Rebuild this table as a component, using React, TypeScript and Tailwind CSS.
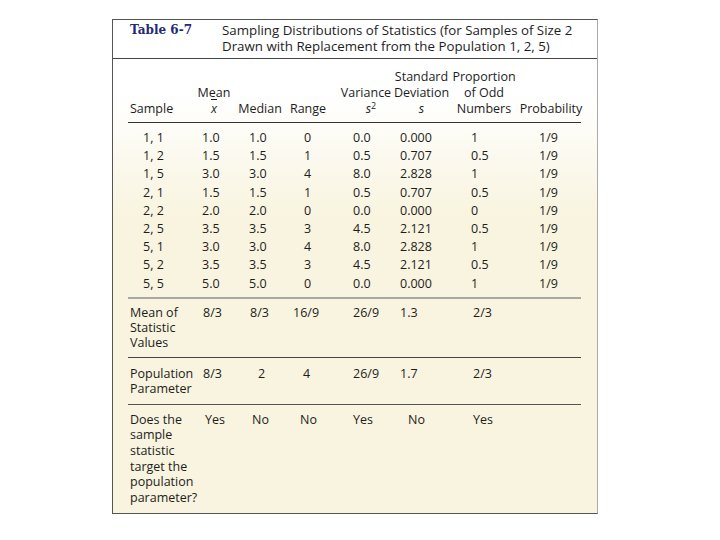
import React from "react";

const rows = [
  ["1, 1", "1.0", "1.0", "0", "0.0", "0.000", "1", "1/9"],
  ["1, 2", "1.5", "1.5", "1", "0.5", "0.707", "0.5", "1/9"],
  ["1, 5", "3.0", "3.0", "4", "8.0", "2.828", "1", "1/9"],
  ["2, 1", "1.5", "1.5", "1", "0.5", "0.707", "0.5", "1/9"],
  ["2, 2", "2.0", "2.0", "0", "0.0", "0.000", "0", "1/9"],
  ["2, 5", "3.5", "3.5", "3", "4.5", "2.121", "0.5", "1/9"],
  ["5, 1", "3.0", "3.0", "4", "8.0", "2.828", "1", "1/9"],
  ["5, 2", "3.5", "3.5", "3", "4.5", "2.121", "0.5", "1/9"],
  ["5, 5", "5.0", "5.0", "0", "0.0", "0.000", "1", "1/9"],
];

// padding of the data cells, one per column
const dataPad = ["pl-[15px]", "pl-[6px]", "pl-[17px]", "pl-[16px]", "pl-[25px]", "pl-[4px]", "pl-[27px]", "pl-[25px]"];

const cols = "grid grid-cols-[68px_36px_56px_40px_68px_48px_70px_66px]";

function Cell({ pad, children }: { pad: string; children: React.ReactNode }) {
  return <div className={`${pad} whitespace-nowrap`}>{children}</div>;
}

export default function App() {
  return (
    <div
      className="min-h-screen bg-white pt-[19px] pl-[112px] text-[#1d1d1d]"
      style={{ fontFamily: '"Open Sans", "Noto Sans", sans-serif' }}
    >
      <div className="w-[486px] border border-[#555] border-r-[#aaa] bg-white">
        {/* title */}
        <div className="flex h-[39px] pt-[2px] border-b border-[#444] text-[13.3px] leading-[16px]">
          <div
            className="w-[109px] pl-[17px] text-[12px] font-bold text-[#232a72]"
            style={{ fontFamily: '"DejaVu Serif", serif' }}
          >
            Table 6-7
          </div>
          <div>
            <div>Sampling Distributions of Statistics (for Samples of Size 2</div>
            <div>Drawn with Replacement from the Population 1, 2, 5)</div>
          </div>
        </div>

        <div className="pl-[15px] pr-[16px] bg-gradient-to-b from-white from-[8%] to-[#f8f4df] to-[35%]">
          {/* column headers */}
          <div className={`${cols} pt-[10px] pb-[5px] border-b border-[#333] text-[12.5px] leading-[16px]`}>
            <div className="flex flex-col justify-end pl-[2px]">Sample</div>
            <div className="flex flex-col justify-end items-center">
              <span>Mean</span>
              <span className="italic overline">x</span>
            </div>
            <div className="flex flex-col justify-end items-center">Median</div>
            <div className="flex flex-col justify-end items-center">Range</div>
            <div className="flex flex-col justify-end items-center pl-[8px] whitespace-nowrap">
              <span>Variance</span>
              <span className="italic pl-[10px]">
                s<sup className="not-italic text-[9px]">2</sup>
              </span>
            </div>
            <div className="flex flex-col justify-end items-center pl-[3px] whitespace-nowrap">
              <span>Standard</span>
              <span>Deviation</span>
              <span className="italic">s</span>
            </div>
            <div className="flex flex-col justify-end items-center pl-[10px] whitespace-nowrap">
              <span>Proportion</span>
              <span>of Odd</span>
              <span>Numbers</span>
            </div>
            <div className="flex flex-col justify-end items-center pl-[8px] whitespace-nowrap">
              Probability
            </div>
          </div>

          {/* sample rows */}
          <div className="pt-[6px] pb-[4px] border-b-2 border-[#a8a8a8] text-[12.5px] leading-[18.2px]">
            {rows.map((r, i) => (
              <div key={i} className={cols}>
                {r.map((v, j) => (
                  <Cell key={j} pad={dataPad[j]}>
                    {v}
                  </Cell>
                ))}
              </div>
            ))}
          </div>

          {/* mean of statistic values */}
          <div className={`${cols} pt-[6px] pb-[7px] border-b border-[#444] text-[12.5px] leading-[15px]`}>
            <div className="pl-[2px]">
              Mean of
              <br />
              Statistic
              <br />
              Values
            </div>
            <Cell pad="pl-[7px]">8/3</Cell>
            <Cell pad="pl-[18px]">8/3</Cell>
            <Cell pad="pl-[5px]">16/9</Cell>
            <Cell pad="pl-[25px]">26/9</Cell>
            <Cell pad="pl-[4px]">1.3</Cell>
            <Cell pad="pl-[29px]">2/3</Cell>
            <div />
          </div>

          {/* population parameter */}
          <div className={`${cols} pt-[8px] pb-[8px] border-b border-[#555] text-[12.5px] leading-[15px]`}>
            <div className="pl-[2px]">
              Population
              <br />
              Parameter
            </div>
            <Cell pad="pl-[7px]">8/3</Cell>
            <Cell pad="pl-[26px]">2</Cell>
            <Cell pad="pl-[15px]">4</Cell>
            <Cell pad="pl-[25px]">26/9</Cell>
            <Cell pad="pl-[4px]">1.7</Cell>
            <Cell pad="pl-[29px]">2/3</Cell>
            <div />
          </div>

          {/* targets */}
          <div className={`${cols} pt-[7px] pb-[8px] text-[12.5px] leading-[15.6px]`}>
            <div className="pl-[2px]">
              Does the
              <br />
              sample
              <br />
              statistic
              <br />
              target the
              <br />
              population
              <br />
              parameter?
            </div>
            <Cell pad="pl-[9px]">Yes</Cell>
            <Cell pad="pl-[20px]">No</Cell>
            <Cell pad="pl-[12px]">No</Cell>
            <Cell pad="pl-[25px]">Yes</Cell>
            <Cell pad="pl-[12px]">No</Cell>
            <Cell pad="pl-[29px]">Yes</Cell>
            <div />
          </div>
        </div>
      </div>
    </div>
  );
}
